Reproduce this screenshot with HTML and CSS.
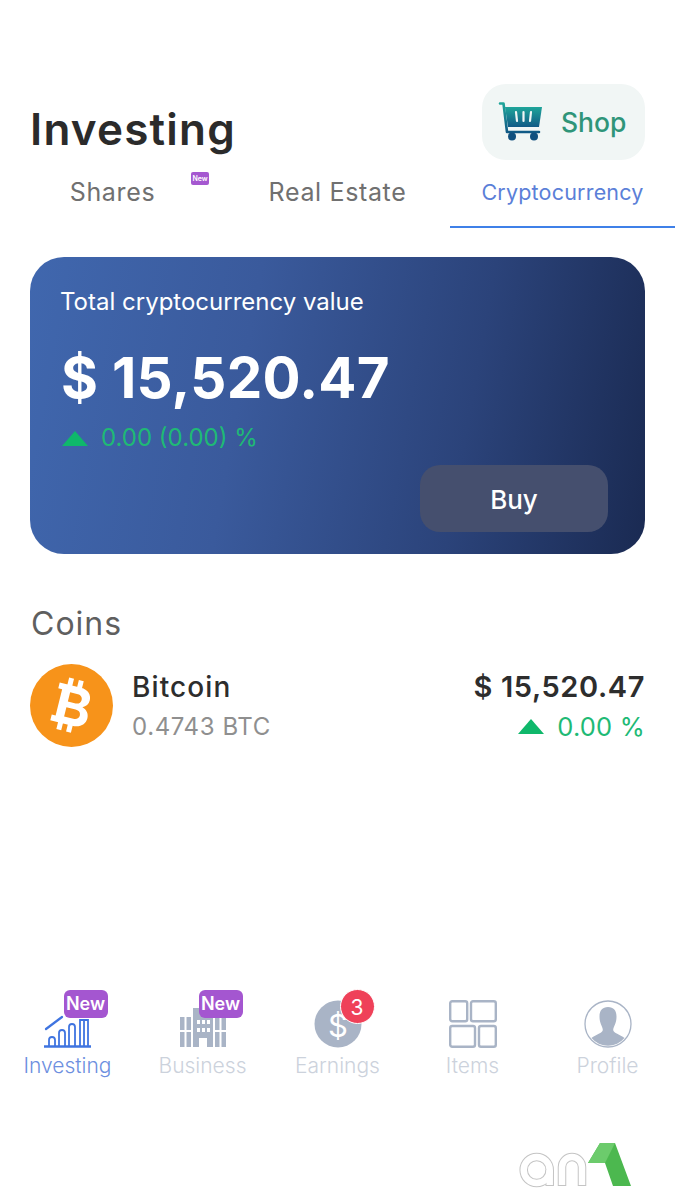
FILE: index.html
```html
<!DOCTYPE html>
<html lang="en">
<head>
<meta charset="utf-8">
<title>Investing</title>
<link rel="stylesheet" href="styles.css">
</head>
<body>
<div class="app">
  <header class="top">
    <h1 class="title">Investing</h1>
    <button class="shop">
      <svg class="cart" viewBox="0 0 46 40" width="46" height="40">
        <defs><linearGradient id="cg" x1="0" y1="0" x2="0" y2="1"><stop offset="0" stop-color="#1fa59a"/><stop offset="1" stop-color="#115a86"/></linearGradient></defs>
        <path d="M7 5h37l-3 20H10z" fill="url(#cg)"/>
        <path d="M2 1.500h3.500L9 30h32" fill="none" stroke="url(#cg)" stroke-width="2.600" stroke-linecap="round" stroke-linejoin="round"/>
        <path d="M18 10l1 9M25.500 10v9M33 10l-1 9" stroke="#f1f6f5" stroke-width="2.200" stroke-linecap="round"/>
        <circle cx="14" cy="34.500" r="4" fill="#10507f"/><circle cx="36" cy="34.500" r="4" fill="#10507f"/>
      </svg>
      <span>Shop</span>
    </button>
  </header>

  <nav class="tabs">
    <div class="tab">Shares<span class="tiny-new">New</span></div>
    <div class="tab">Real Estate</div>
    <div class="tab active">Cryptocurrency</div>
  </nav>

  <section class="card">
    <div class="card-label">Total cryptocurrency value</div>
    <div class="card-value">$ 15,520.47</div>
    <div class="card-change"><span class="tri"></span>0.00 (0.00) %</div>
    <div class="card-actions"><button class="buy">Buy</button></div>
  </section>

  <h2 class="coins">Coins</h2>
  <div class="coin">
    <svg class="btc" viewBox="0 0 83 83" width="83" height="83">
      <circle cx="41.500" cy="41.500" r="41.500" fill="#f7931a"/>
      <g transform="rotate(14 41.500 41.500) translate(-1.500 0)" fill="#fff">
        <path d="M34 15h5v9h-5zM44 15h5v9h-5zM34 59h5v9h-5zM44 59h5v9h-5z"/>
        <path fill-rule="evenodd" d="M26 22h22c7 0 11.500 4.300 11.500 10 0 4-2 7-5.500 8.500 4.500 1.300 7.500 4.700 7.500 9.500 0 6.500-5 11-13 11H26v-6h4V28h-4zM38.500 29v9.500h8c3 0 5-2 5-4.800s-2-4.700-5-4.700zM38.500 44.500V54h9.500c3.500 0 5.500-2 5.500-4.800s-2-4.700-5.500-4.700z"/>
      </g>
    </svg>
    <div class="coin-info">
      <div class="coin-name">Bitcoin</div>
      <div class="coin-qty">0.4743 BTC</div>
    </div>
    <div class="coin-right">
      <div class="coin-price">$ 15,520.47</div>
      <div class="coin-change"><span class="tri"></span>0.00 %</div>
    </div>
  </div>

  <nav class="bottom">
    <div class="item blue">
      <div class="icon">
        <svg viewBox="0 0 48 48" width="48" height="48" fill="none" stroke="#3f74e0" stroke-width="1.800">
          <path d="M0 46.500h47" stroke-width="2.500"/>
          <path d="M2 29L18 17" stroke-width="2.200" stroke-linecap="round"/>
          <path d="M5 46v-6a3 3 0 0 1 6 0v6M15 46V33a3 3 0 0 1 6 0v13M25 46V27a3 3 0 0 1 6 0v19M36 46V20h8v26M40 20v26"/>
        </svg>
        <span class="new">New</span>
      </div>
      <div class="label">Investing</div>
    </div>
    <div class="item">
      <div class="icon">
        <svg viewBox="0 0 48 48" width="48" height="48" fill="#a9b4c6">
          <path fill-rule="evenodd" d="M1 17h11v30H1zM14 8h20v39h-6v-9h-8v9h-6zM36 17h11v30H36zM23 1h2v7h-2z"/>
          <path fill="#fff" d="M5.500 17h2v30h-2zM40.500 17h2v30h-2zM1 30h11v2H1zM36 30h11v2H36zM18 20h3v4h-3zM23 20h3v4h-3zM28 20h3v4h-3zM18 28h3v4h-3zM23 28h3v4h-3zM28 28h3v4h-3zM21.500 40h5v7h-5z"/>
        </svg>
        <span class="new">New</span>
      </div>
      <div class="label">Business</div>
    </div>
    <div class="item">
      <div class="icon">
        <svg viewBox="0 0 48 48" width="48" height="48">
          <circle cx="24" cy="24" r="23.500" fill="#a9b4c6"/>
          <text x="24" y="37" text-anchor="middle" class="dollar">$</text>
        </svg>
        <span class="count">3</span>
      </div>
      <div class="label">Earnings</div>
    </div>
    <div class="item">
      <div class="icon">
        <svg viewBox="0 0 48 48" width="48" height="48" fill="none" stroke="#a9b4c6" stroke-width="2.400">
          <rect x="1.200" y="1.200" width="17" height="20" rx="2"/>
          <rect x="22" y="1.200" width="24.800" height="20" rx="2"/>
          <rect x="1.200" y="26" width="24.800" height="20.800" rx="2"/>
          <rect x="30" y="26" width="16.800" height="20.800" rx="2"/>
        </svg>
      </div>
      <div class="label">Items</div>
    </div>
    <div class="item">
      <div class="icon">
        <svg viewBox="0 0 48 48" width="48" height="48">
          <circle cx="24" cy="24" r="23" fill="#fff" stroke="#a9b4c6" stroke-width="1.300"/>
          <path fill="#a9b4c6" d="M24 7c5.500 0 8.500 3.500 8.500 9.500 0 3-.5 5.500-1.500 8-1 2.400-1.800 3.500-1.800 5.500 0 3 7 4.500 11.300 8a21.500 21.500 0 0 1-33 0c4.300-3.500 11.300-5 11.300-8 0-2-.8-3.100-1.800-5.500-1-2.500-1.500-5-1.500-8C15.500 10.500 18.500 7 24 7z"/>
        </svg>
      </div>
      <div class="label">Profile</div>
    </div>
  </nav>

  <footer class="foot">
    <svg class="logo" viewBox="0 0 114 47" width="114" height="47" fill="none">
      <g stroke="#c4c4c4" stroke-width="8.500">
        <circle cx="18.700" cy="28" r="13"/><path d="M31.700 28v16M44 44V25a10 10 0 0 1 20 0v19"/>
      </g>
      <g stroke="#fff" stroke-width="6.500">
        <circle cx="18.700" cy="28" r="13"/><path d="M31.700 28v15M44 43V25a10 10 0 0 1 20 0v18"/>
      </g>
      <path d="M82 1H97l16 43H95L87 21H70z" fill="#4cb84f"/>
      <path d="M82 1H97L87 21H70z" fill="#6ccb6c"/>
    </svg>
  </footer>
</div>
</body>
</html>
```
FILE: styles.css
```css
* { box-sizing: border-box; }
html, body { margin: 0; padding: 0; background: #fff; }
body { font-family: Inter, "Liberation Sans", sans-serif; }
.app { width: 675px; height: 1200px; display: flex; flex-direction: column; overflow: hidden; }
button { font-family: inherit; border: 0; }

.top { display: flex; justify-content: space-between; align-items: flex-end; padding: 84px 30px 0 30px; height: 160px; }
.title { margin: 0; font-size: 44px; line-height: 52px; font-weight: 600; color: #2b2b2b; letter-spacing: 1.200px; padding-bottom: 5px; }
.shop { width: 163px; height: 76px; border-radius: 24px; background: #f1f6f5; display: flex; align-items: center; gap: 17px; padding: 0 0 0 16px; color: #2f9579; font-size: 26.500px; font-weight: 500; }
.cart { flex: none; }

.tabs { display: grid; grid-template-columns: repeat(3, 225px); height: 68px; }
.tab { display: flex; align-items: center; justify-content: center; font-size: 25px; color: #707070; padding-bottom: 5px; height: 68px; position: relative; letter-spacing: .65px; }
.tab.active { color: #5b7fd8; font-size: 21.500px; font-weight: 400; border-bottom: 2px solid #3f80e8; letter-spacing: .2px; padding-bottom: 3px; }
.tiny-new { position: absolute; left: 191px; top: 12px; width: 18px; height: 13px; background: #a558d0; border-radius: 2px; color: #fff; font-size: 7px; font-weight: 600; line-height: 13px; text-align: center; letter-spacing: 0; }

.card { margin: 29px 30px 0; height: 297px; border-radius: 34px; padding: 30px 37px 22px 31px; color: #fff; display: flex; flex-direction: column; background: linear-gradient(100deg, #4067ae 0%, #3a5a9c 35%, #2b437a 70%, #1a2a52 100%); }
.card-label { font-size: 24px; line-height: 30px; margin-left: -1px; }
.card-value { font-size: 56.500px; line-height: 66px; font-weight: 700; margin-top: 28px; letter-spacing: .25px; }
.card-change { display: flex; align-items: center; font-size: 24px; line-height: 30px; color: #1fba75; margin-top: 12px; }
.tri { width: 0; height: 0; border-left: 13px solid transparent; border-right: 13px solid transparent; border-bottom: 15px solid #0fb86b; margin: 0 13px 0 1px; }
.card-actions { margin-top: auto; display: flex; justify-content: flex-end; }
.buy { width: 188px; height: 67px; border-radius: 20px; background: #454f6e; color: #fff; font-size: 26px; font-weight: 500; padding-top: 2px; }

.coins { margin: 51px 30px 0; font-size: 32px; line-height: 38px; font-weight: 400; color: #5f5f5f; letter-spacing: 1px; padding-left: 1px; }
.coin { display: flex; align-items: center; margin: 21px 30px 0; height: 83px; }
.btc { flex: none; }
.coin-info { margin-left: 19px; flex: 1; padding-top: 2px; }
.coin-name { font-size: 28px; line-height: 36px; font-weight: 500; color: #2d2d2d; letter-spacing: 1.100px; }
.coin-qty { font-size: 24px; line-height: 36px; color: #8f8f8f; margin-top: 4px; letter-spacing: .6px; }
.coin-right { text-align: right; padding-top: 2px; }
.coin-price { font-size: 29px; line-height: 36px; font-weight: 600; color: #2d2d2d; letter-spacing: .6px; }
.coin-change { display: flex; align-items: center; justify-content: flex-end; font-size: 25.500px; line-height: 36px; color: #1fba75; margin-top: 4px; letter-spacing: .2px; }

.bottom { display: grid; grid-template-columns: repeat(5, 135px); margin-top: 253px; }
.item { display: flex; flex-direction: column; align-items: center; }
.icon { position: relative; width: 48px; height: 48px; }
.icon svg { display: block; }
.new { position: absolute; left: 20px; top: -10px; width: 44px; height: 28px; border-radius: 6px; background: #a456d0; color: #fff; font-size: 18px; font-weight: 600; line-height: 28px; text-align: center; }
.count { position: absolute; left: 26px; top: -11px; width: 35px; height: 35px; border-radius: 50%; background: #ef4159; color: #fff; font-size: 21px; line-height: 35px; text-align: center; border: 1px solid #fff; }
.dollar { font-family: Inter, sans-serif; font-size: 31px; fill: #fff; }
.label { font-size: 21px; line-height: 26px; color: #ccd2dc; margin-top: 5px; font-weight: 300; }
.item.blue .label { color: #6d8fe0; }

.foot { display: flex; justify-content: flex-end; padding-right: 43px; margin-top: 63px; }
```
